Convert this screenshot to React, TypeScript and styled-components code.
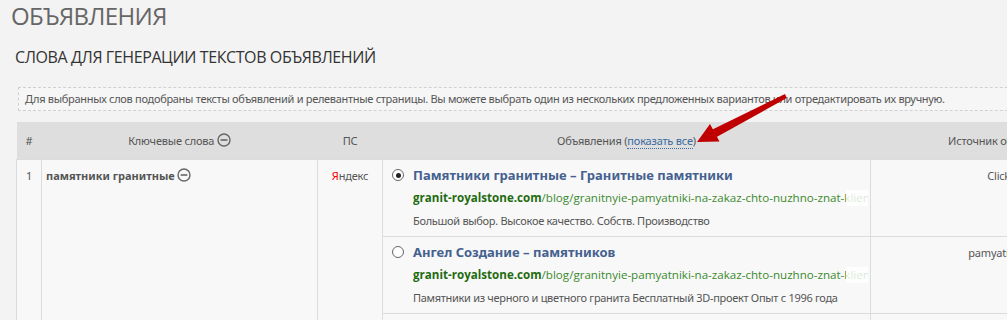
import styled, { createGlobalStyle } from "styled-components";

const GlobalStyle = createGlobalStyle`
  body {
    margin: 0;
    background: #f3f3f3;
    overflow: hidden;
    font-family: "Noto Sans", "Liberation Sans", sans-serif;
    color: #555;
  }
`;

interface Ad {
  title: string;
  domain: string;
  path: string;
  text: string;
  source: string;
  checked?: boolean;
}

const ads: Ad[] = [
  {
    title: "Памятники гранитные – Гранитные памятники",
    domain: "granit-royalstone.com",
    path: "/blog/granitnyie-pamyatniki-na-zakaz-chto-nuzhno-znat-klientu",
    text: "Большой выбор. Высокое качество. Собств. Производство",
    source: "Click.ru",
    checked: true,
  },
  {
    title: "Ангел Создание – памятников",
    domain: "granit-royalstone.com",
    path: "/blog/granitnyie-pamyatniki-na-zakaz-chto-nuzhno-znat-klientu",
    text: "Памятники из черного и цветного гранита Бесплатный 3D-проект Опыт с 1996 года",
    source: "pamyatniki.net",
  },
  {
    title: "Гранитные памятники от производителя",
    domain: "granit-royalstone.com",
    path: "/catalog/pamyatniki-iz-granita",
    text: "Изготовление и установка памятников под ключ",
    source: "Директ",
  },
];

function MinusIcon() {
  return (
    <Icon width="14" height="14" viewBox="0 0 14 14">
      <circle cx="7" cy="7" r="6" fill="none" stroke="#666" strokeWidth="1.4" />
      <line x1="3.6" y1="7" x2="10.4" y2="7" stroke="#666" strokeWidth="1.6" />
    </Icon>
  );
}

function Arrow() {
  return (
    <ArrowSvg width="1007" height="320" viewBox="0 0 1007 320">
      <polygon
        points="785,94 786.8,98 716.6,137 712.4,129.4"
        fill="#c00000"
      />
      <polygon points="697,142 710,124 719.5,141.5" fill="#c00000" />
    </ArrowSvg>
  );
}

export default function App() {
  return (
    <Page>
      <GlobalStyle />
      <Title>ОБЪЯВЛЕНИЯ</Title>
      <Subtitle>СЛОВА ДЛЯ ГЕНЕРАЦИИ ТЕКСТОВ ОБЪЯВЛЕНИЙ</Subtitle>
      <Info>
        Для выбранных слов подобраны тексты объявлений и релевантные страницы. Вы можете
        выбрать один из нескольких предложенных вариантов или отредактировать их вручную.
      </Info>
      <Table>
        <colgroup>
          <col style={{ width: 25 }} />
          <col style={{ width: 276 }} />
          <col style={{ width: 65 }} />
          <col style={{ width: 488 }} />
          <col style={{ width: 270 }} />
        </colgroup>
        <thead>
          <tr>
            <Th>#</Th>
            <Th>
              Ключевые слова <MinusIcon />
            </Th>
            <Th>ПС</Th>
            <Th>
              Объявления (<ShowAll>показать все</ShowAll>)
            </Th>
            <Th>Источник объявления</Th>
          </tr>
        </thead>
        <tbody>
          {ads.map((ad, i) => (
            <tr key={i}>
              {i === 0 && (
                <>
                  <NumCell rowSpan={ads.length}>1</NumCell>
                  <KeywordCell rowSpan={ads.length}>
                    <strong>памятники гранитные</strong> <MinusIcon />
                  </KeywordCell>
                  <EngineCell rowSpan={ads.length}>
                    <Ya>Я</Ya>ндекс
                  </EngineCell>
                </>
              )}
              <AdCell>
                <AdItem>
                  <Radio $checked={!!ad.checked} />
                  <AdBody>
                    <AdTitle>{ad.title}</AdTitle>
                    <AdUrl>
                      <Domain>{ad.domain}</Domain>
                      {ad.path}
                    </AdUrl>
                    <AdText>{ad.text}</AdText>
                  </AdBody>
                </AdItem>
              </AdCell>
              <SourceCell>{ad.source}</SourceCell>
            </tr>
          ))}
        </tbody>
      </Table>
      <Arrow />
    </Page>
  );
}

const Page = styled.div`
  position: relative;
  width: 1007px;
  height: 320px;
`;

const Title = styled.h1`
  margin: 0;
  padding: 0 0 0 11px;
  font-family: "Open Sans", sans-serif;
  font-weight: 400;
  font-size: 24px;
  line-height: 32px;
  letter-spacing: -0.6px;
  color: #666;
`;

const Subtitle = styled.h2`
  margin: 14px 0 0 15px;
  font-family: "Open Sans", sans-serif;
  font-weight: 400;
  font-size: 16px;
  line-height: 22px;
  letter-spacing: -0.4px;
  color: #333;
`;

const Info = styled.div`
  margin: 19px 0 0 18px;
  width: 1100px;
  box-sizing: border-box;
  height: 24px;
  padding: 0 6px;
  border: 1px dashed #d0d0d0;
  border-right: none;
  background: #f6f6f6;
  font-size: 11px;
  line-height: 22px;
  letter-spacing: -0.3px;
  color: #555;
  white-space: nowrap;
`;

const Table = styled.table`
  margin: 11px 0 0 16px;
  width: 1124px;
  table-layout: fixed;
  border-collapse: collapse;
  font-size: 11px;
  letter-spacing: -0.2px;
`;

const Th = styled.th`
  height: 37px;
  padding: 0;
  background: #dedede;
  font-weight: 400;
  color: #555;
  text-align: center;
  white-space: nowrap;
`;

const ShowAll = styled.span`
  color: #3a6aa0;
  border-bottom: 1px dotted #3a6aa0;
`;

const Icon = styled.svg`
  vertical-align: -2px;
`;

const Cell = styled.td`
  border: 1px solid #dcdcdc;
  background: #f8f8f8;
  vertical-align: top;
  padding: 0;
`;

const NumCell = styled(Cell)`
  text-align: center;
  padding-top: 8px;
  color: #555;
`;

const KeywordCell = styled(Cell)`
  padding: 8px 4px 0;
  color: #555;

  strong {
    font-weight: 700;
    letter-spacing: 0;
  }
`;

const EngineCell = styled(Cell)`
  text-align: center;
  padding-top: 8px;
  color: #555;
`;

const Ya = styled.span`
  color: #f00;
`;

const AdCell = styled(Cell)`
  height: 76px;
  letter-spacing: 0;
`;

const AdItem = styled.div`
  display: flex;
  gap: 9px;
  padding: 7px 2px 0 9px;
`;

const Radio = styled.span<{ $checked: boolean }>`
  flex: none;
  position: relative;
  width: 12px;
  height: 12px;
  margin-top: 2px;
  box-sizing: border-box;
  border: 1px solid #666;
  border-radius: 50%;
  background: #fff;

  &::after {
    content: "";
    display: ${(p) => (p.$checked ? "block" : "none")};
    position: absolute;
    left: 2.5px;
    top: 2.5px;
    width: 5px;
    height: 5px;
    border-radius: 50%;
    background: #222;
  }
`;

const AdBody = styled.div`
  flex: 1;
  min-width: 0;
  display: flex;
  flex-direction: column;
  gap: 7px;
`;

const AdTitle = styled.div`
  font-size: 13px;
  line-height: 16px;
  font-weight: 700;
  color: #44618f;
  white-space: nowrap;
`;

const AdUrl = styled.div`
  position: relative;
  overflow: hidden;
  white-space: nowrap;
  font-family: "Open Sans", sans-serif;
  font-size: 11.6px;
  line-height: 16px;
  color: #3b8a2e;

  &::after {
    content: "";
    position: absolute;
    top: 0;
    right: 0;
    width: 22px;
    height: 100%;
    background: rgba(255, 255, 255, 0.82);
  }
`;

const Domain = styled.span`
  color: #1f6b10;
  font-weight: 700;
`;

const AdText = styled.div`
  font-size: 11px;
  line-height: 16px;
  letter-spacing: -0.3px;
  color: #555;
  white-space: nowrap;
`;

const SourceCell = styled(Cell)`
  text-align: center;
  padding-top: 8px;
  color: #555;
`;

const ArrowSvg = styled.svg`
  position: absolute;
  left: 0;
  top: 0;
  pointer-events: none;
`;
